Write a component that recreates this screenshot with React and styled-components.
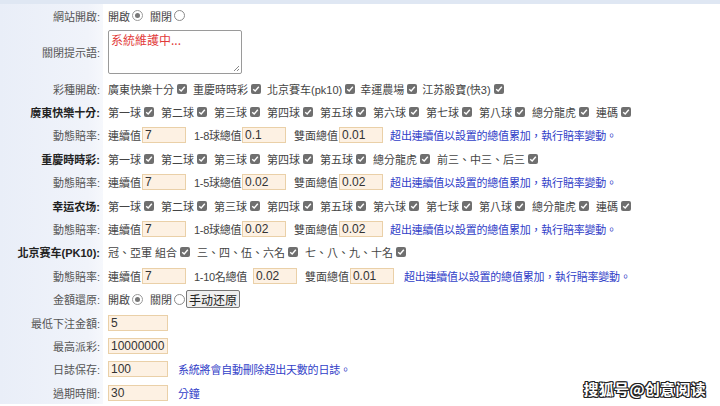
import React from "react";
import styled, { createGlobalStyle } from "styled-components";

const Global = createGlobalStyle`
  html, body { margin: 0; padding: 0; background: #fff; }
  body { font-family: "Liberation Sans", "Noto Sans CJK TC", sans-serif; font-size: 11px; color: #444; }
  * { box-sizing: border-box; }
`;

const Page = styled.div`
  position: relative;
  width: 720px;
  height: 406px;
  overflow: hidden;
  background: #fff;
`;

const TopBar = styled.div`
  height: 4px;
  background: #dfe7f3;
`;

const Form = styled.div`
  display: grid;
  grid-template-columns: 103px 1fr;
  grid-auto-rows: auto;
`;

const Label = styled.div`
  display: flex;
  align-items: center;
  justify-content: flex-end;
  height: ${(p) => (p.$tall ? 49.6 : 23.4)}px;
  padding-right: 3px;
  background: linear-gradient(to right, #e9eef8, #f0f3fa 85%, #f6f8fc);
  color: ${(p) => (p.$bold ? "#222" : "#555")};
  font-weight: ${(p) => (p.$bold ? 700 : 400)};
  white-space: nowrap;
`;

const Value = styled.div`
  display: flex;
  align-items: center;
  height: ${(p) => (p.$tall ? 49.6 : 23.4)}px;
  padding-left: 5px;
  white-space: nowrap;
  color: #444;
`;

const Text = styled.span`
  color: #444;
`;

const Box = styled.span`
  display: inline-flex;
  align-items: center;
  justify-content: center;
  width: 10px;
  height: 10px;
  border-radius: 2px;
  background: #6f6f6f;
  margin: 0 ${(p) => p.$gap ?? 7}px 0 3px;
`;

const RadioDot = styled.span`
  display: inline-flex;
  align-items: center;
  justify-content: center;
  width: 11px;
  height: 11px;
  border-radius: 50%;
  border: 1px solid ${(p) => (p.$on ? "#9a9a9a" : "#8a8a8a")};
  background: #fff;
  margin: 0 ${(p) => p.$mr ?? 7}px 0 2px;
  &::after {
    content: "";
    display: ${(p) => (p.$on ? "block" : "none")};
    width: 5px;
    height: 5px;
    border-radius: 50%;
    background: #777;
  }
`;

const Field = styled.span`
  display: inline-flex;
  align-items: center;
  width: ${(p) => p.$w || 44}px;
  height: 16px;
  padding-left: 2px;
  margin: 0 ${(p) => p.$mr ?? 8}px 0 ${(p) => p.$ml ?? 1}px;
  background: #fdf1e3;
  border: 1px solid #ead0a8;
  color: #333;
  font-size: 12px;
  font-family: "Liberation Sans", sans-serif;
`;

const Small = styled.span`
  color: #444;
  letter-spacing: -0.3px;
`;

const Note = styled.span`
  color: #3140c8;
  letter-spacing: -0.2px;
`;

const Area = styled.div`
  position: relative;
  width: 134px;
  height: 44px;
  border: 1px solid #9a9a9a;
  border-radius: 2px;
  padding: 1px 2px;
  color: #e23a3a;
  font-size: 12px;
  font-family: "Noto Sans CJK SC", sans-serif;
  line-height: 16px;
`;

const Grip = styled.svg`
  position: absolute;
  right: 1px;
  bottom: 1px;
`;

const Button = styled.span`
  display: inline-flex;
  align-items: center;
  justify-content: center;
  height: 18px;
  padding: 0 2px;
  border: 1px solid #777;
  border-radius: 2px;
  background: #efefef;
  color: #222;
  font-size: 12px;
  margin-left: 1px;
`;

const Watermark = styled.div`
  position: absolute;
  right: 14px;
  bottom: 7px;
  font-family: "Noto Sans CJK SC", sans-serif;
  font-weight: 700;
  font-size: 15px;
  letter-spacing: 0.3px;
  color: #fff;
  text-shadow: 1px 1px 0 #222, -1px -1px 0 #222, 1px -1px 0 #222, -1px 1px 0 #222, 0 1px 0 #222, 1px 0 0 #222, 0 -1px 0 #222, -1px 0 0 #222;
`;

const Check = ({ label, gap }) => (
  <>
    <Text>{label}</Text>
    <Box $gap={gap}>
      <svg width="8" height="8" viewBox="0 0 8 8">
        <path d="M1.2 4.2 L3.2 6 L6.8 1.8" fill="none" stroke="#fff" strokeWidth="1.4" />
      </svg>
    </Box>
  </>
);

const Radio = ({ label, on, mr }) => (
  <>
    <Text>{label}</Text>
    <RadioDot $on={on} $mr={mr} />
  </>
);

const balls8 = ["第一球", "第二球", "第三球", "第四球", "第五球", "第六球", "第七球", "第八球", "總分龍虎", "連碼"];
const balls5 = ["第一球", "第二球", "第三球", "第四球", "第五球", "總分龍虎", "前三、中三、后三"];

const NOTE = "超出連續值以設置的總值累加，執行賠率變動。";

const Odds = ({ mid, midVal, dual, wide }) => (
  <Value>
    <Text>連續值</Text>
    <Field>7</Field>
    <Small>{mid}</Small>
    <Field $ml={wide ? 6 : 1}>{midVal}</Field>
    <Text>雙面總值</Text>
    <Field $mr={wide ? 10 : 7}>{dual}</Field>
    <Note>{NOTE}</Note>
  </Value>
);

export default function App() {
  return (
    <Page>
      <Global />
      <TopBar />
      <Form>
        <Label>網站開啟:</Label>
        <Value>
          <Radio label="開啟" on />
          <Radio label="關閉" />
        </Value>

        <Label $tall>關閉提示語:</Label>
        <Value $tall>
          <Area>
            系統維護中...
            <Grip width="8" height="8" viewBox="0 0 8 8">
              <path d="M7 2 L2 7 M7 5 L5 7" stroke="#888" strokeWidth="1" />
            </Grip>
          </Area>
        </Value>

        <Label>彩種開啟:</Label>
        <Value>
          <Check label="廣東快樂十分" gap={6} />
          <Check label="重慶時時彩" gap={6} />
          <Check label="北京賽车(pk10)" gap={5} />
          <Check label="幸運農場" gap={5} />
          <Check label="江苏骰寶(快3)" />
        </Value>

        <Label $bold>廣東快樂十分:</Label>
        <Value>
          {balls8.map((b) => (
            <Check key={b} label={b} />
          ))}
        </Value>

        <Label>動態賠率:</Label>
        <Odds mid="1-8球總值" midVal="0.1" dual="0.01" />

        <Label $bold>重慶時時彩:</Label>
        <Value>
          {balls5.map((b) => (
            <Check key={b} label={b} />
          ))}
        </Value>

        <Label>動態賠率:</Label>
        <Odds mid="1-5球總值" midVal="0.02" dual="0.02" />

        <Label $bold>幸运农场:</Label>
        <Value>
          {balls8.map((b) => (
            <Check key={b} label={b} />
          ))}
        </Value>

        <Label>動態賠率:</Label>
        <Odds mid="1-8球總值" midVal="0.02" dual="0.02" />

        <Label $bold>北京赛车(PK10):</Label>
        <Value>
          <Check label="冠、亞軍 組合" />
          <Check label="三、四、伍、六名" />
          <Check label="七、八、九、十名" />
        </Value>

        <Label>動態賠率:</Label>
        <Odds mid="1-10名總值" midVal="0.02" dual="0.01" wide />

        <Label>金額還原:</Label>
        <Value>
          <Radio label="開啟" on />
          <Radio label="關閉" mr={0} />
          <Button>手动还原</Button>
        </Value>

        <Label>最低下注金額:</Label>
        <Value>
          <Field $w={60} $ml={0}>5</Field>
        </Value>

        <Label>最高派彩:</Label>
        <Value>
          <Field $w={60} $ml={0}>10000000</Field>
        </Value>

        <Label>日誌保存:</Label>
        <Value>
          <Field $w={60} $ml={0} $mr={10}>100</Field>
          <Note>系統將會自動刪除超出天數的日誌。</Note>
        </Value>

        <Label>過期時間:</Label>
        <Value>
          <Field $w={60} $ml={0} $mr={10}>30</Field>
          <Note>分鐘</Note>
        </Value>
      </Form>
      <Watermark>搜狐号@创意阅读</Watermark>
    </Page>
  );
}
